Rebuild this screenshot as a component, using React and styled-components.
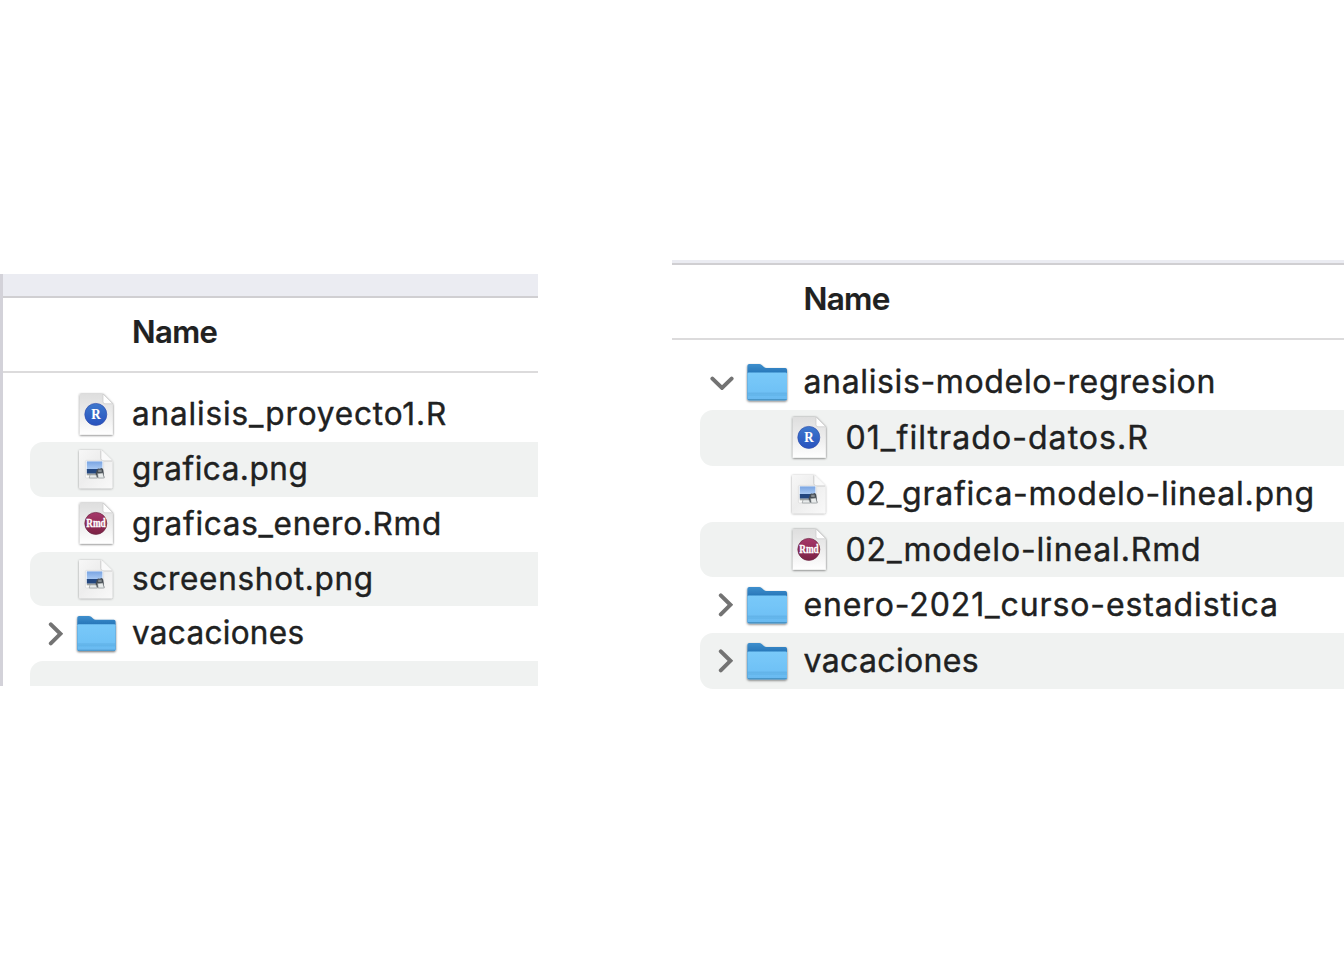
import React, { useId } from "react";
import styled, { createGlobalStyle } from "styled-components";

const Global = createGlobalStyle`
  * { box-sizing: border-box; }
  body {
    margin: 0;
    background: #fff;
    color: #202121;
    font-family: Inter, "Liberation Sans", sans-serif;
  }
`;

const Page = styled.main`
  width: 1344px;
  height: 960px;
  display: flex;
  align-items: flex-start;
  justify-content: space-between;
  overflow: hidden;
`;

const Panel = styled.section`
  width: ${(p) => p.$width}px;
  height: ${(p) => p.$height}px;
  margin-top: ${(p) => p.$top}px;
  border-left: ${(p) => (p.$edge ? "3px solid #d3d2d9" : "none")};
  overflow: hidden;
`;

const Band = styled.div`
  height: ${(p) => p.$height}px;
  background: #ebecf2;
  border-bottom: 2px solid #d0cfd2;
`;

const Header = styled.header`
  height: ${(p) => p.$height}px;
  padding: 0 0 ${(p) => p.$lift}px ${(p) => p.$indent}px;
  display: flex;
  align-items: center;
  border-bottom: 2px solid #dcdbdc;
`;

const List = styled.ul`
  margin: 0;
  padding: ${(p) => p.$top}px 0 0 ${(p) => p.$indent}px;
  list-style: none;
`;

const Row = styled.li`
  height: ${(p) => p.$height}px;
  display: flex;
  align-items: center;
  border-radius: 13px 0 0 13px;
  background: ${(p) => (p.$shaded ? "#f0f2f1" : "transparent")};
`;

const Disclosure = styled.span`
  width: 40px;
  flex: none;
  display: flex;
  justify-content: flex-end;
  padding-right: ${(p) => p.$gap}px;
`;

const IconSlot = styled.span`
  width: 52px;
  flex: none;
  display: flex;
  justify-content: center;
  margin-left: ${(p) => p.$shift}px;
`;

const Label = styled.span`
  font-size: ${(p) => p.$size}px;
  font-weight: ${(p) => (p.$bold ? 600 : 400)};
  -webkit-text-stroke: ${(p) => (p.$bold ? 0.2 : 0.4)}px #202121;
  line-height: 40px;
  padding-bottom: ${(p) => p.$lift || 0}px;
  white-space: nowrap;
  letter-spacing: ${(p) => p.$spacing || 0}px;
`;

function Chevron({ open }) {
  return open ? (
    <svg width="24" height="15" viewBox="0 0 24 15" fill="none">
      <path d="M2.4 3.6 12 12.9 21.6 3.6" stroke="#737373" strokeWidth="4" strokeLinecap="round" />
    </svg>
  ) : (
    <svg width="15" height="24" viewBox="0 0 15 24" fill="none">
      <path d="M2.8 2.3 12.4 11.8 2.8 21.3" stroke="#737373" strokeWidth="4" strokeLinecap="round" />
    </svg>
  );
}

function Folder({ size }) {
  const id = useId();
  return (
    <svg width={size} height={size} viewBox="0 0 44 44" overflow="visible">
      <defs>
        <linearGradient id={id + "b"} x1="0" y1="0" x2="0" y2="1">
          <stop offset="0" stopColor="#3f8fcd" />
          <stop offset=".24" stopColor="#2777b9" />
        </linearGradient>
        <linearGradient id={id + "f"} x1="0" y1="0" x2="0" y2="1">
          <stop offset="0" stopColor="#79c9f9" />
          <stop offset=".65" stopColor="#70c2f6" />
          <stop offset="1" stopColor="#68b8ef" />
        </linearGradient>
        <filter id={id + "s"} x="-20%" y="-20%" width="140%" height="150%">
          <feDropShadow dx="0" dy="1.1" stdDeviation="1" floodColor="#000" floodOpacity=".55" />
        </filter>
      </defs>
      <g transform="translate(.2 .8)">
        <g filter={`url(#${id}s)`}>
          <path d="M2.2 5Q2.2 3.3 4 3.3H14Q15.4 3.3 16.5 4.2L18.7 6.2Q19.7 7.2 21.2 7.2H40.1Q41.8 7.2 41.8 9V38Q41.8 39.5 39.8 39.5H4.2Q2.2 39.5 2.2 38Z" fill={`url(#${id}b)`} />
          <path d="M2.2 12.9Q2.2 11.8 3.6 11.8H40.4Q41.8 11.8 41.8 12.9V38Q41.8 39.5 39.8 39.5H4.2Q2.2 39.5 2.2 38Z" fill={`url(#${id}f)`} />
        </g>
        <path d="M2.4 32.4H41.6M2.4 34.2H41.6" stroke="#58a9de" strokeWidth=".7" />
        <path d="M2.8 38.8H41.2" stroke="#428dc0" strokeWidth=".9" />
      </g>
    </svg>
  );
}

function ScriptFile({ kind }) {
  const id = useId();
  const isR = kind === "r";
  return (
    <svg width="40" height="48" viewBox="0 0 40 48" overflow="visible">
      <defs>
        <linearGradient id={id + "p"} x1="0" y1="0" x2="0" y2="1">
          <stop offset="0" stopColor="#dedede" />
          <stop offset=".6" stopColor="#f0f0f0" />
          <stop offset="1" stopColor="#fff" />
        </linearGradient>
        <linearGradient id={id + "c"} x1="0" y1="0" x2="0" y2="1">
          <stop offset="0" stopColor={isR ? "#3d78cd" : "#a7386a"} />
          <stop offset="1" stopColor={isR ? "#2852be" : "#7c2144"} />
        </linearGradient>
        <filter id={id + "s"} x="-20%" y="-20%" width="140%" height="140%">
          <feDropShadow dx="0" dy=".5" stdDeviation=".8" floodColor="#000" floodOpacity=".65" />
        </filter>
      </defs>
      <path d="M3.8 3H27L36.8 13V43.8H3.8Z" fill={`url(#${id}p)`} filter={`url(#${id}s)`} />
      <path d="M27 3V10.8Q27 12.8 29 12.8H36.8Z" fill="#fff" stroke="#c8c8c8" strokeWidth=".7" />
      <circle cx="19.8" cy="23.4" r="11" fill={`url(#${id}c)`} stroke={isR ? "#3450ad" : "#6d2946"} strokeWidth=".7" />
      <text
        x="20"
        y={isR ? 27.9 : 26.8}
        textAnchor="middle"
        fontFamily='"Liberation Serif", serif'
        fontWeight="700"
        fontSize={isR ? 14 : 11.5}
        textLength={isR ? 9.4 : 19.5}
        lengthAdjust="spacingAndGlyphs"
        fill="#fff"
        stroke="#fff"
        strokeWidth={isR ? 0.1 : 0.3}
      >
        {isR ? "R" : "Rmd"}
      </text>
    </svg>
  );
}

function ImageFile() {
  const id = useId();
  return (
    <svg width="40" height="48" viewBox="0 0 40 48" overflow="visible">
      <defs>
        <linearGradient id={id + "p"} x1="0" y1="0" x2="1" y2="1">
          <stop offset="0" stopColor="#f7f7f7" />
          <stop offset=".45" stopColor="#ededed" />
          <stop offset="1" stopColor="#f9f9f9" />
        </linearGradient>
        <linearGradient id={id + "k"} x1="0" y1="0" x2="0" y2="1">
          <stop offset="0" stopColor="#79a4e2" />
          <stop offset="1" stopColor="#afcdf4" />
        </linearGradient>
        <filter id={id + "s"} x="-20%" y="-20%" width="140%" height="140%">
          <feDropShadow dx="0" dy=".5" stdDeviation=".8" floodColor="#000" floodOpacity=".4" />
        </filter>
      </defs>
      <path d="M4 5H25.2L36.4 16V42.2Q36.4 43.3 35.3 43.3H4.2Q3 43.3 3 42.2V6Q3 5 4 5Z" fill={`url(#${id}p)`} filter={`url(#${id}s)`} />
      <path d="M25.2 5V13.5Q25.2 15.8 27.5 15.8H36.3Z" fill="#fafafa" />
      <path d="M24.8 5.4V13.5Q24.8 16 27.5 16H36.2" fill="none" stroke="#c8c8c8" strokeWidth=".9" />
      <rect x="9.4" y="15.4" width="18.2" height="17.6" rx="1" fill="#fafafa" stroke="#d5d5d5" strokeWidth=".6" />
      <rect x="10.8" y="16.4" width="15.6" height="8.6" fill={`url(#${id}k)`} />
      <rect x="10.8" y="24" width="15.6" height="4.7" fill="#24477f" />
      <path d="M10.8 28.7H26.4V30.3H10.8Z" fill="#a1a49f" />
      <path d="M19.5 29 21.2 24.2Q22 22.8 23.5 23.8L26 23Q27.6 24.1 27.6 27.2L28.3 32.6H20Z" fill="#454c53" />
      <path d="M14 29.8H20L21.4 33H13.2ZM21.6 28.5 26.8 28 28.3 33H22.2Z" fill="#e8ebeb" stroke="#858a8d" strokeWidth=".6" />
      <path d="M22.2 24.7H25.7V27H22.2Z" fill="#858b90" />
    </svg>
  );
}

function FileIcon({ kind, folderSize }) {
  if (kind === "folder") return <Folder size={folderSize} />;
  if (kind === "png") return <ImageFile />;
  return <ScriptFile kind={kind} />;
}

const personal = [
  { name: "analisis_proyecto1.R", kind: "r", spacing: 0.86 },
  { name: "grafica.png", kind: "png", spacing: 0.53 },
  { name: "graficas_enero.Rmd", kind: "rmd", spacing: 0.72 },
  { name: "screenshot.png", kind: "png", spacing: 0.7 },
  { name: "vacaciones", kind: "folder", spacing: 0.3 },
];

const organised = [
  { name: "analisis-modelo-regresion", kind: "folder", open: true, spacing: 0.64 },
  { name: "01_filtrado-datos.R", kind: "r", nested: true, spacing: 1.07 },
  { name: "02_grafica-modelo-lineal.png", kind: "png", nested: true, spacing: 0.75 },
  { name: "02_modelo-lineal.Rmd", kind: "rmd", nested: true, spacing: 0.85 },
  { name: "enero-2021_curso-estadistica", kind: "folder", spacing: 0.88 },
  { name: "vacaciones", kind: "folder", spacing: 0.35 },
];

const Columns = styled.div`
  display: flex;
  align-items: center;
  gap: ${(p) => p.$gap}px;
`;

function FileRow({ file, index, height, folderSize, iconShift, textSize, textGap, lift }) {
  return (
    <Row $height={height} $shaded={index % 2 === 1}>
      <Disclosure $gap={file.open ? 6 : 7.5}>
        {file.kind === "folder" && <Chevron open={file.open} />}
      </Disclosure>
      <Columns $gap={textGap}>
        <IconSlot $shift={iconShift + (file.nested ? 42 : 0)}>
          <FileIcon kind={file.kind} folderSize={folderSize} />
        </IconSlot>
        <Label $size={textSize} $spacing={file.spacing} $lift={lift}>{file.name}</Label>
      </Columns>
    </Row>
  );
}

export default function App() {
  return (
    <Page>
      <Global />
      <Panel $width={538} $height={411.5} $top={274} $edge>
        <Band $height={24} />
        <Header $height={75} $indent={129} $lift={5}>
          <Label $size={31} $bold $spacing={-0.6}>Name</Label>
        </Header>
        <List $top={14.3} $indent={27}>
          {personal.map((f, i) => (
            <FileRow key={f.name} file={f} index={i} height={54.75} folderSize={42.5} iconShift={0} textSize={31.5} textGap={10} lift={0.8} />
          ))}
          <Row $height={54.75} $shaded />
        </List>
      </Panel>
      <Panel $width={672} $height={429} $top={260}>
        <Band $height={4.5} />
        <Header $height={75.5} $indent={131.5} $lift={4.5}>
          <Label $size={31.5} $bold $spacing={-0.7}>Name</Label>
        </Header>
        <List $top={14.6} $indent={28}>
          {organised.map((f, i) => (
            <FileRow key={f.name} file={f} index={i} height={55.7} folderSize={44} iconShift={1} textSize={32} textGap={10.5} lift={0} />
          ))}
        </List>
      </Panel>
    </Page>
  );
}
